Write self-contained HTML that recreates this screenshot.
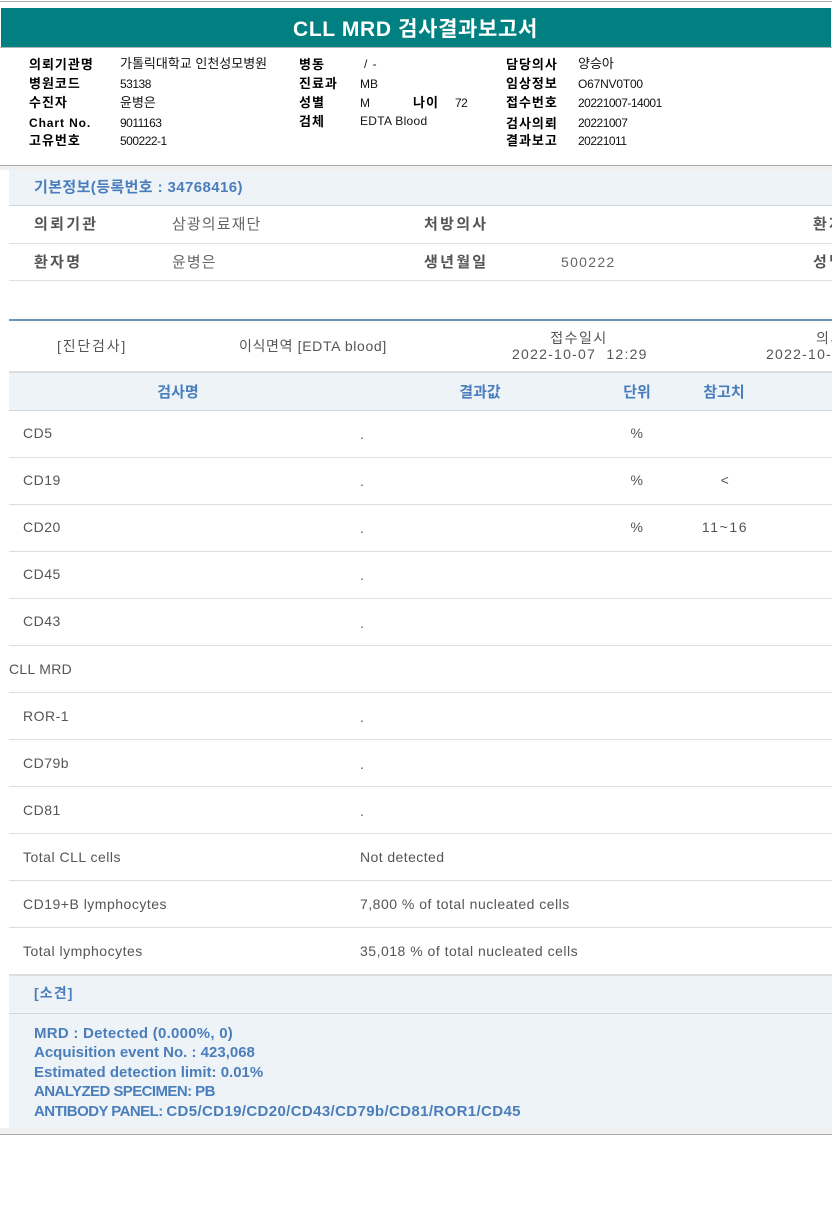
<!DOCTYPE html>
<html lang="ko"><head><meta charset="utf-8"><title>CLL MRD 검사결과보고서</title>
<style>
html,body{margin:0;padding:0;background:#fff}
body{width:832px;height:1228px;position:relative;overflow:hidden;font-family:"Liberation Sans","Noto Sans CJK KR",sans-serif}
.r{position:absolute}
.t{position:absolute;white-space:nowrap;height:20px;line-height:20px}
.l{font-size:13px;font-weight:700;color:#000;letter-spacing:1px}
.v{font-size:12px;color:#111}
.k{font-size:13px;color:#111}
.n{font-size:12px;color:#111;letter-spacing:-.5px}
.h{font-size:15px;font-weight:700;color:#555;letter-spacing:2.3px}
.g{font-size:15px;color:#666;letter-spacing:1.1px}
.d{font-size:14px;color:#555;letter-spacing:.5px}
.c{transform:translateX(-50%)}
.b{font-size:15px;font-weight:700;color:#4a7ebb}
</style></head><body>
<div class="r" style="left:0;top:1px;width:832px;height:1px;background:#aaa"></div>
<div class="r" style="left:1px;top:8px;width:830px;height:39px;background:#008080"></div>
<div class="r" style="left:0;top:47px;width:832px;height:1px;background:#a8b8b8"></div>
<div class="t" style="left:293px;top:20px;font-size:21px;font-weight:700;color:#fff;letter-spacing:.65px">CLL MRD 검사결과보고서</div>

<div class="t l" style="left:29px;top:55px">의뢰기관명</div><div class="t k" style="left:120px;top:54px">가톨릭대학교 인천성모병원</div>
<div class="t l" style="left:29px;top:74px">병원코드</div><div class="t n" style="left:120px;top:74px">53138</div>
<div class="t l" style="left:29px;top:93px">수진자</div><div class="t k" style="left:120px;top:93px">윤병은</div>
<div class="t l" style="left:29px;top:113px;font-size:12px;letter-spacing:.9px">Chart No.</div><div class="t n" style="left:120px;top:113px">9011163</div>
<div class="t l" style="left:29px;top:131px">고유번호</div><div class="t n" style="left:120px;top:131px">500222-1</div>

<div class="t l" style="left:299px;top:55px">병동</div><div class="t v" style="left:364px;top:54px;letter-spacing:1px">/ -</div>
<div class="t l" style="left:299px;top:74px">진료과</div><div class="t v" style="left:360px;top:74px">MB</div>
<div class="t l" style="left:299px;top:93px">성별</div><div class="t v" style="left:360px;top:93px">M</div>
<div class="t l" style="left:413px;top:93px">나이</div><div class="t n" style="left:455px;top:93px">72</div>
<div class="t l" style="left:299px;top:112px">검체</div><div class="t v" style="left:360px;top:111px;letter-spacing:.3px">EDTA Blood</div>

<div class="t l" style="left:506px;top:55px">담당의사</div><div class="t k" style="left:578px;top:54px">양승아</div>
<div class="t l" style="left:506px;top:74px">임상정보</div><div class="t n" style="left:578px;top:74px;letter-spacing:-.2px">O67NV0T00</div>
<div class="t l" style="left:506px;top:93px">접수번호</div><div class="t n" style="left:578px;top:93px">20221007-14001</div>
<div class="t l" style="left:506px;top:114px">검사의뢰</div><div class="t n" style="left:578px;top:113px">20221007</div>
<div class="t l" style="left:506px;top:131px">결과보고</div><div class="t n" style="left:578px;top:131px">20221011</div>

<div class="r" style="left:0;top:165px;width:832px;height:1px;background:#aaa"></div>
<div class="r" style="left:0;top:166px;width:832px;height:4px;background:#f0f0f0"></div>
<div class="r" style="left:9px;top:170px;width:823px;height:35px;background:#eef3f8"></div>
<div class="r" style="left:9px;top:205px;width:823px;height:1px;background:#cdd8e2"></div>
<div class="t b" style="left:34px;top:178px;letter-spacing:.4px">기본정보(등록번호 : 34768416)</div>
<div class="t h" style="left:34px;top:215px">의뢰기관</div><div class="t g" style="left:172px;top:215px">삼광의료재단</div>
<div class="t h" style="left:424px;top:215px">처방의사</div><div class="t h" style="left:813px;top:215px">환자</div>
<div class="r" style="left:9px;top:243px;width:823px;height:1px;background:#e0e0e0"></div>
<div class="t h" style="left:34px;top:253px">환자명</div><div class="t g" style="left:172px;top:253px">윤병은</div>
<div class="t h" style="left:424px;top:253px">생년월일</div><div class="t g" style="left:561px;top:252px;font-size:14px;letter-spacing:1.3px">500222</div><div class="t h" style="left:813px;top:253px">성별</div>
<div class="r" style="left:9px;top:280px;width:823px;height:1px;background:#e0e0e0"></div>

<div class="r" style="left:9px;top:319px;width:823px;height:2px;background:#6b96b5"></div>
<div class="t d" style="left:57px;top:336px;letter-spacing:1.8px">[진단검사]</div>
<div class="t d" style="left:239px;top:336px;letter-spacing:.65px">이식면역 [EDTA blood]</div>
<div class="t d c" style="left:579px;top:328px;letter-spacing:1.5px">접수일시</div>
<div class="t d" style="left:512px;top:344px;letter-spacing:1.25px">2022-10-07&nbsp; 12:29</div>
<div class="t d" style="left:816px;top:328px;letter-spacing:1.5px">의뢰</div>
<div class="t d" style="left:766px;top:344px;letter-spacing:1.25px">2022-10-07</div>
<div class="r" style="left:9px;top:371px;width:823px;height:2px;background:#ddd"></div>
<div class="r" style="left:9px;top:373px;width:823px;height:37px;background:#eef3f8"></div>
<div class="r" style="left:9px;top:410px;width:823px;height:1px;background:#cdd8e2"></div>
<div class="t b c" style="left:178px;top:383px">검사명</div>
<div class="t b c" style="left:480px;top:383px">결과값</div>
<div class="t b c" style="left:637px;top:383px">단위</div>
<div class="t b c" style="left:724px;top:383px">참고치</div>

<div class="t d" style="left:23px;top:423px">CD5</div><div class="t d" style="left:360px;top:424px">.</div><div class="t d c" style="left:637px;top:423px">%</div>
<div class="r" style="left:9px;top:457px;width:823px;height:1px;background:#ddd"></div>
<div class="t d" style="left:23px;top:470px">CD19</div><div class="t d" style="left:360px;top:471px">.</div><div class="t d c" style="left:637px;top:470px">%</div><div class="t d c" style="left:725px;top:470px">&lt;</div>
<div class="r" style="left:9px;top:504px;width:823px;height:1px;background:#ddd"></div>
<div class="t d" style="left:23px;top:517px">CD20</div><div class="t d" style="left:360px;top:518px">.</div><div class="t d c" style="left:637px;top:517px">%</div><div class="t d c" style="left:725px;top:517px;letter-spacing:1.6px">11~16</div>
<div class="r" style="left:9px;top:551px;width:823px;height:1px;background:#ddd"></div>
<div class="t d" style="left:23px;top:564px">CD45</div><div class="t d" style="left:360px;top:565px">.</div>
<div class="r" style="left:9px;top:598px;width:823px;height:1px;background:#ddd"></div>
<div class="t d" style="left:23px;top:611px">CD43</div><div class="t d" style="left:360px;top:613px">.</div>
<div class="r" style="left:9px;top:645px;width:823px;height:1px;background:#ddd"></div>
<div class="t d" style="left:9px;top:659px;letter-spacing:.3px">CLL MRD</div>
<div class="r" style="left:9px;top:692px;width:823px;height:1px;background:#ddd"></div>
<div class="t d" style="left:23px;top:706px">ROR-1</div><div class="t d" style="left:360px;top:707px">.</div>
<div class="r" style="left:9px;top:739px;width:823px;height:1px;background:#ddd"></div>
<div class="t d" style="left:23px;top:753px">CD79b</div><div class="t d" style="left:360px;top:754px">.</div>
<div class="r" style="left:9px;top:786px;width:823px;height:1px;background:#ddd"></div>
<div class="t d" style="left:23px;top:800px">CD81</div><div class="t d" style="left:360px;top:801px">.</div>
<div class="r" style="left:9px;top:833px;width:823px;height:1px;background:#ddd"></div>
<div class="t d" style="left:23px;top:847px">Total CLL cells</div><div class="t d" style="left:360px;top:847px;letter-spacing:.42px">Not detected</div>
<div class="r" style="left:9px;top:880px;width:823px;height:1px;background:#ddd"></div>
<div class="t d" style="left:23px;top:894px">CD19+B lymphocytes</div><div class="t d" style="left:360px;top:894px">7,800 % of total nucleated cells</div>
<div class="r" style="left:9px;top:927px;width:823px;height:1px;background:#ddd"></div>
<div class="t d" style="left:23px;top:941px">Total lymphocytes</div><div class="t d" style="left:360px;top:941px">35,018 % of total nucleated cells</div>

<div class="r" style="left:0;top:1128px;width:832px;height:6px;background:#f0f0f0"></div>
<div class="r" style="left:9px;top:974px;width:823px;height:2px;background:#ddd"></div>
<div class="r" style="left:9px;top:976px;width:823px;height:152px;background:#eef3f8"></div>
<div class="r" style="left:9px;top:1013px;width:823px;height:1px;background:#cdd8e2"></div>
<div class="t b" style="left:34px;top:983px;font-size:14px;letter-spacing:1.1px">[소견]</div>
<div class="t b" style="left:34px;top:1024px;letter-spacing:.25px">MRD : Detected (0.000%, 0)</div>
<div class="t b" style="left:34px;top:1043px">Acquisition event No. : 423,068</div>
<div class="t b" style="left:34px;top:1063px">Estimated detection limit: 0.01%</div>
<div class="t b" style="left:34px;top:1082px;letter-spacing:-.57px">ANALYZED SPECIMEN: PB</div>
<div class="t b" style="left:34px;top:1102px"><span style="letter-spacing:-.55px">ANTIBODY PANEL: </span><span style="letter-spacing:.37px">CD5/CD19/CD20/CD43/CD79b/CD81/ROR1/CD45</span></div>
<div class="r" style="left:0;top:1134px;width:832px;height:1px;background:#aaa"></div>
</body></html>
